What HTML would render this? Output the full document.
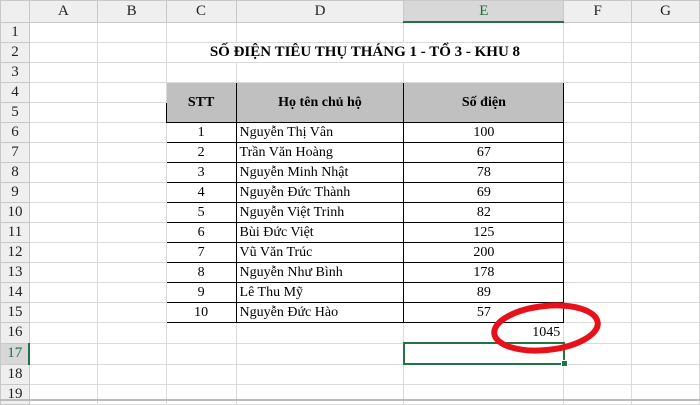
<!DOCTYPE html>
<html><head><meta charset="utf-8">
<style>
body{margin:0;width:700px;height:401px;overflow:hidden;background:#fff;position:relative;font-family:"Liberation Serif",serif;}
table{border-collapse:collapse;table-layout:fixed;position:absolute;left:0;top:0;}
td{height:19px;padding:0 3px;border:1px solid #dadada;font-size:14px;color:#000;white-space:nowrap;overflow:visible;line-height:19px;}
tr.h td{height:20px;background:#efefef;border-color:#c8c8c8;text-align:center;font-size:15px;color:#222;}
td.rn{background:#efefef;border-color:#c8c8c8;text-align:center;font-size:15px;color:#222;padding:0;}
td.corner{background:#efefef;}
.selh{background:#d8d8d8 !important;color:#1e6e3c !important;border-bottom:2px solid #217346 !important;}
.selr{background:#d8d8d8 !important;color:#1e6e3c !important;border-right:2px solid #217346 !important;}
.t{border:1px solid #000;}
.c{text-align:center;}
.r{text-align:right;}
.hd{background:#c0c0c0;font-weight:bold;text-align:center;border:1px solid #000;}
.sel{border:2px solid #217346;}
</style></head><body>
<table>
<colgroup><col style="width:29px"><col style="width:68px"><col style="width:69px"><col style="width:70px"><col style="width:168px"><col style="width:160px"><col style="width:68px"><col style="width:68px"></colgroup>
<tr class="h"><td class="corner"></td><td>A</td><td>B</td><td>C</td><td>D</td><td class="selh">E</td><td>F</td><td>G</td></tr>
<tr><td class="rn">1</td><td></td><td></td><td></td><td></td><td></td><td></td><td></td></tr>
<tr><td class="rn">2</td><td></td><td></td><td colspan="3" class="c" style="font-weight:bold;font-size:15px">SỐ ĐIỆN TIÊU THỤ THÁNG 1 - TỔ 3 - KHU 8</td><td></td><td></td></tr>
<tr><td class="rn">3</td><td></td><td></td><td></td><td></td><td></td><td></td><td></td></tr>
<tr><td class="rn">4</td><td></td><td></td><td rowspan="2" class="hd">STT</td><td rowspan="2" class="hd">Họ tên chủ hộ</td><td rowspan="2" class="hd">Số điện</td><td></td><td></td></tr>
<tr><td class="rn">5</td><td></td><td></td><td></td><td></td></tr>
<tr><td class="rn">6</td><td></td><td></td><td class="t c">1</td><td class="t">Nguyễn Thị Vân</td><td class="t c">100</td><td></td><td></td></tr>
<tr><td class="rn">7</td><td></td><td></td><td class="t c">2</td><td class="t">Trần Văn Hoàng</td><td class="t c">67</td><td></td><td></td></tr>
<tr><td class="rn">8</td><td></td><td></td><td class="t c">3</td><td class="t">Nguyễn Minh Nhật</td><td class="t c">78</td><td></td><td></td></tr>
<tr><td class="rn">9</td><td></td><td></td><td class="t c">4</td><td class="t">Nguyễn Đức Thành</td><td class="t c">69</td><td></td><td></td></tr>
<tr><td class="rn">10</td><td></td><td></td><td class="t c">5</td><td class="t">Nguyễn Việt Trinh</td><td class="t c">82</td><td></td><td></td></tr>
<tr><td class="rn">11</td><td></td><td></td><td class="t c">6</td><td class="t">Bùi Đức Việt</td><td class="t c">125</td><td></td><td></td></tr>
<tr><td class="rn">12</td><td></td><td></td><td class="t c">7</td><td class="t">Vũ Văn Trúc</td><td class="t c">200</td><td></td><td></td></tr>
<tr><td class="rn">13</td><td></td><td></td><td class="t c">8</td><td class="t">Nguyễn Như Bình</td><td class="t c">178</td><td></td><td></td></tr>
<tr><td class="rn">14</td><td></td><td></td><td class="t c">9</td><td class="t">Lê Thu Mỹ</td><td class="t c">89</td><td></td><td></td></tr>
<tr><td class="rn">15</td><td></td><td></td><td class="t c">10</td><td class="t">Nguyễn Đức Hào</td><td class="t c">57</td><td></td><td></td></tr>
<tr><td class="rn">16</td><td></td><td></td><td></td><td></td><td class="r">1045</td><td></td><td></td></tr>
<tr><td class="rn selr">17</td><td></td><td></td><td></td><td></td><td class="sel"></td><td></td><td></td></tr>
<tr><td class="rn">18</td><td></td><td></td><td></td><td></td><td></td><td></td><td></td></tr>
<tr><td class="rn">19</td><td></td><td></td><td></td><td></td><td></td><td></td><td></td></tr>
</table>
<div style="position:absolute;left:561px;top:360px;width:5px;height:5px;background:#217346;border:1px solid #fff"></div>
<svg style="position:absolute;left:0;top:0" width="700" height="401"><ellipse cx="546" cy="328" rx="52" ry="22" fill="none" stroke="#e8101a" stroke-width="6" transform="rotate(-6 546 328)"/></svg>
<div style="position:absolute;left:0;top:399px;width:700px;height:2px;background:#bbb"></div>
</body></html>
